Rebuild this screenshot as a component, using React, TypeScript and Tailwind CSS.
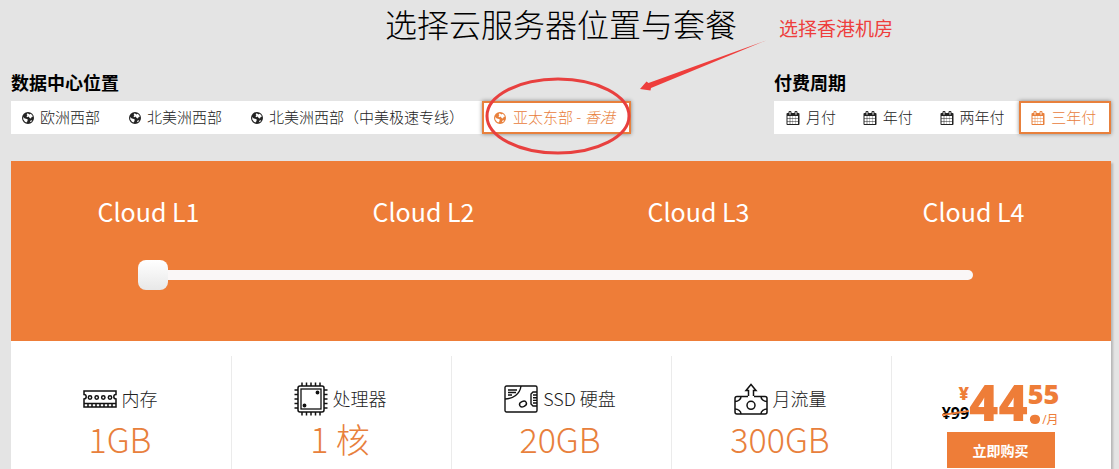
import { useState, type ReactNode } from "react";

const CALENDAR_PATH =
  "M192 1664h288v-288h-288v288zM544 1664h320v-288h-320v288zM192 1312h288v-320h-288v320zM544 1312h320v-320h-320v320zM192 928h288v-288h-288v288zM896 1664h320v-288h-320v288zM544 928h320v-288h-320v288zM1248 1664h288v-288h-288v288zM896 1312h320v-320h-320v320zM576 448v-288q0 -13 -9.5 -22.5t-22.5 -9.5h-64q-13 0 -22.5 9.5t-9.5 22.5v288q0 13 9.5 22.5t22.5 9.5h64q13 0 22.5 -9.5t9.5 -22.5zM1248 1312h288v-320h-288v320zM896 928h320v-288h-320v288zM1248 928h288v-288h-288v288zM1344 448v-288q0 -13 -9.5 -22.5t-22.5 -9.5h-64q-13 0 -22.5 9.5t-9.5 22.5v288q0 13 9.5 22.5t22.5 9.5h64q13 0 22.5 -9.5t9.5 -22.5zM1728 384v1280q0 52 -38 90t-90 38h-1408q-52 0 -90 -38t-38 -90v-1280q0 -52 38 -90t90 -38h128v-96q0 -66 47 -113t113 -47h64q66 0 113 47t47 113v96h384v-96q0 -66 47 -113t113 -47h64q66 0 113 47t47 113v96h128q52 0 90 38t38 90z";

function CalendarIcon() {
  return (
    <svg viewBox="0 0 1792 1792" className="size-[14px] shrink-0" fill="currentColor" fillRule="evenodd" aria-hidden="true">
      <path d={CALENDAR_PATH} />
    </svg>
  );
}

function GlobeIcon() {
  return (
    <svg viewBox="0 0 12 12" className="size-[12px] shrink-0" fill="currentColor" fillRule="evenodd" aria-hidden="true">
      <path d="M6 0a6 6 0 1 1 0 12A6 6 0 0 1 6 0zM5.800 1.200L4.600 2.200L5.400 3.200L4.400 4.200L5.600 5.200L6.800 4.600L7.600 6L9 6.400L9.600 5L10.900 4.600A5 5 0 0 0 8.600 1.700L7.400 2.400zM1.200 5L1.300 7.400L3 9.800L4.400 10.600L5.400 9.200L5.800 7.600L4.200 6.800L2.800 6.400zM8.600 8.600L7.800 10.200L9.600 9.400L10.200 8.200z" />
    </svg>
  );
}

function MemoryIcon() {
  return (
    <svg viewBox="0 0 34 18" className="h-[18px] w-[34px]" fill="none" stroke="#111" strokeWidth="1.5" aria-hidden="true">
      <path d="M1 1h32v3.500a2.200 2.200 0 0 0 0 4.400V17H1V8.900a2.200 2.200 0 0 0 0-4.400z" />
      <circle cx="7" cy="7.500" r="1.700" />
      <circle cx="13.700" cy="7.500" r="1.700" />
      <circle cx="20.300" cy="7.500" r="1.700" />
      <circle cx="27" cy="7.500" r="1.700" />
      <path d="M1 13.500h32M5 13.500V17M9 13.500V17M13 13.500V17M17 13.500V17M21 13.500V17M25 13.500V17M29 13.500V17" />
    </svg>
  );
}

function CpuIcon() {
  return (
    <svg viewBox="0 0 34 34" className="size-[34px]" fill="none" stroke="#111" strokeWidth="1.500" aria-hidden="true">
      <rect x="4" y="4" width="26" height="26" rx="2" />
      <rect x="7" y="7" width="20" height="20" strokeWidth="1.300" />
      <path d="M8 4V.5M12.500 4V.5M17 4V.5M21.500 4V.5M26 4V.5M8 30v3.500M12.500 30v3.500M17 30v3.500M21.500 30v3.500M26 30v3.500M4 8H.5M4 12.500H.5M4 17H.5M4 21.500H.5M4 26H.5M30 8h3.500M30 12.500h3.500M30 17h3.500M30 21.500h3.500M30 26h3.500" />
      <circle cx="23.500" cy="10.500" r="1.200" fill="#111" />
      <circle cx="10.500" cy="23.500" r="1.200" fill="#111" />
    </svg>
  );
}

function DiskIcon() {
  return (
    <svg viewBox="0 0 34 28" className="h-[28px] w-[34px]" fill="none" stroke="#111" strokeWidth="1.400" aria-hidden="true">
      <rect x="1" y="1" width="32" height="26" rx="1.500" />
      <path d="M17 1C16 9 9 14 1 14M4 5h9M4 7.500h8M4 10h4" />
      <ellipse cx="19" cy="19" rx="3.600" ry="2.600" transform="rotate(-25 19 19)" />
      <path d="M33 7h-4l-2 2v10l2 2h4M29 10h4M29 12.700h4M29 15.400h4M29 18h4" />
    </svg>
  );
}

function TrafficIcon() {
  return (
    <svg viewBox="0 0 34 32" className="h-[32px] w-[34px]" fill="none" stroke="#111" strokeWidth="1.500" aria-hidden="true">
      <path d="M14.500 13V7.500H12L17 1.500l5 6h-2.500V13" />
      <path d="M14 13.500H3a2 2 0 0 0-2 2V29a2 2 0 0 0 2 2h28a2 2 0 0 0 2-2V15.500a2 2 0 0 0-2-2H20" />
      <path d="M7 13.500a6 5 0 0 1-6 5M27 13.500a6 5 0 0 0 6 5M1 26a6 5 0 0 1 6 5M33 26a6 5 0 0 0-6 5" />
      <circle cx="17" cy="22.300" r="4" />
    </svg>
  );
}

type OptionProps = {
  selected: boolean;
  onClick: () => void;
  icon: ReactNode;
  layout: string;
  children: ReactNode;
};

function Option({ selected, onClick, icon, layout, children }: OptionProps) {
  return (
    <button
      type="button"
      aria-pressed={selected}
      onClick={onClick}
      className={
        "flex h-[33px] items-center whitespace-nowrap border-2 text-[15px] font-light " +
        layout +
        (selected
          ? " border-[#e8803c] text-[#e8803c] shadow-[0_0_4px_rgba(0,0,0,0.45)]"
          : " border-transparent text-[#222]")
      }
    >
      {icon}
      <span>{children}</span>
    </button>
  );
}

function Annotation() {
  return (
    <div className="pointer-events-none absolute -left-[3px] -top-[85px]">
      <svg width="300" height="150" viewBox="479 16 300 150" fill="none" aria-hidden="true">
        <ellipse cx="558" cy="116" rx="71" ry="37" stroke="#e8403f" strokeWidth="3" />
        <path d="M766 40.500L651 88L650.500 90.500L640 89L646.500 81.500L648.500 83Z" fill="#ee3e3c" />
      </svg>
      <span className="absolute left-[300px] top-0 whitespace-nowrap text-[19px] leading-6 text-[#ee3e3c]">选择香港机房</span>
    </div>
  );
}

const REGION_LAYOUT = "gap-[6px] pl-[9px] pr-4";
const CYCLE_LAYOUT = "grow gap-[6px] px-[10px]";

const regions = ["欧洲西部", "北美洲西部", "北美洲西部（中美极速专线）"];
const cycles = ["月付", "年付", "两年付", "三年付"];
const plans = ["Cloud L1", "Cloud L2", "Cloud L3", "Cloud L4"];
const specs = [
  { icon: <MemoryIcon />, label: "内存", value: "1GB" },
  { icon: <CpuIcon />, label: "处理器", value: "1 核" },
  { icon: <DiskIcon />, label: "SSD 硬盘", value: "20GB" },
  { icon: <TrafficIcon />, label: "月流量", value: "300GB" },
];

export default function App() {
  const [region, setRegion] = useState(3);
  const [cycle, setCycle] = useState(3);
  const [plan, setPlan] = useState(0);

  return (
    <main className="flex min-h-screen flex-col bg-[#e4e4e4] pl-[11px] pr-2 font-['Noto_Sans_CJK_SC',sans-serif] text-black">
      <h1 className="pt-[2px] text-center text-[32px] font-light leading-[42px]">选择云服务器位置与套餐</h1>

      <div className="flex justify-between pt-[26px]">
        <section className="w-[620px]">
          <h2 className="text-[18px] font-bold leading-6">数据中心位置</h2>
          <div className="mt-[7px] flex bg-white">
            {regions.map((name, i) => (
              <Option key={name} selected={region === i} onClick={() => setRegion(i)} icon={<GlobeIcon />} layout={REGION_LAYOUT}>
                {name}
              </Option>
            ))}
            <div className="relative flex grow">
              <Option selected={region === 3} onClick={() => setRegion(3)} icon={<GlobeIcon />} layout="grow gap-[7px] pl-[10px]">
                亚太东部 - <em>香港</em>
              </Option>
              <Annotation />
            </div>
          </div>
        </section>
        <section className="w-[337px]">
          <h2 className="text-[18px] font-bold leading-6">付费周期</h2>
          <div className="mt-[7px] flex bg-white">
            {cycles.map((name, i) => (
              <Option key={name} selected={cycle === i} onClick={() => setCycle(i)} icon={<CalendarIcon />} layout={CYCLE_LAYOUT}>
                {name}
              </Option>
            ))}
          </div>
        </section>
      </div>

      <div className="mt-[27px] flex grow flex-col bg-white shadow-[2px_2px_2px_rgba(0,0,0,0.2)]">
        <div className="bg-[#ee7d38] pb-[51px] pt-[30px] text-white">
          <div className="grid grid-cols-4 text-center text-[25px] leading-10">
            {plans.map((name) => (
              <span key={name}>{name}</span>
            ))}
          </div>
          <div className="flex pl-[127px] pr-[138px] pt-[29px]">
            <input
              type="range"
              min={0}
              max={3}
              value={plan}
              aria-label="套餐"
              onChange={(e) => setPlan(Number(e.target.value))}
              className="h-[30px] w-full appearance-none bg-transparent [&::-webkit-slider-runnable-track]:h-[10px] [&::-webkit-slider-runnable-track]:rounded-[5px] [&::-webkit-slider-runnable-track]:bg-[#faf7f7] [&::-webkit-slider-thumb]:-mt-[10px] [&::-webkit-slider-thumb]:size-[30px] [&::-webkit-slider-thumb]:appearance-none [&::-webkit-slider-thumb]:rounded-[8px] [&::-webkit-slider-thumb]:bg-linear-to-b [&::-webkit-slider-thumb]:from-white [&::-webkit-slider-thumb]:to-[#e8e8e8]"
            />
          </div>
        </div>

        <div className="grid grow grid-cols-5 pt-[15px]">
          {specs.map((s) => (
            <div key={s.label} className="border-l border-[#ebebeb] pr-[3px] pt-[26px] first:border-transparent">
              <div className="flex h-[34px] items-center justify-center gap-[5px] text-[18px] font-light text-[#222]">
                {s.icon}
                <span className="pb-[2px]">{s.label}</span>
              </div>
              <div className="text-center text-[34px] font-light leading-[46px] text-[#e8803c]">{s.value}</div>
            </div>
          ))}
          <div className="flex flex-col items-center border-l border-[#ebebeb] pr-[2px] pt-[26px] text-[#ee7d38]">
            <div className="flex h-[50px] font-['Open_Sans','Noto_Sans_CJK_SC',sans-serif]">
              <div className="flex flex-col items-end">
                <span className="text-[18px] font-extrabold leading-[22px]">¥</span>
                <span className="relative text-[16px] font-bold leading-[18px] text-black">
                  ¥99
                  <svg viewBox="0 0 32 18" className="absolute inset-0 size-full" preserveAspectRatio="none" aria-hidden="true">
                    <path d="M0 11L32 7" stroke="#ee7d38" strokeWidth="2" />
                  </svg>
                </span>
              </div>
              <span className="text-[50px] font-extrabold leading-[40px]">44</span>
              <div className="flex flex-col">
                <span className="text-[27px] font-extrabold leading-[23px]">55</span>
                <div className="flex items-baseline">
                  <span className="text-[50px] font-extrabold leading-[0px]">.</span>
                  <span className="text-[12px] leading-[14px]">/月</span>
                </div>
              </div>
            </div>
            <button type="button" className="h-9 w-[108px] bg-[#ee7d38] text-[14px] font-bold text-white">
              立即购买
            </button>
          </div>
        </div>
      </div>
    </main>
  );
}
